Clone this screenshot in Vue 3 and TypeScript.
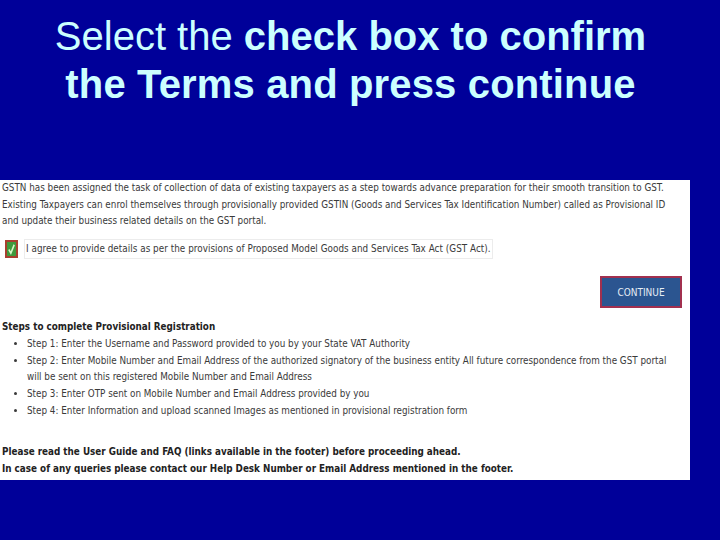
<script setup lang="ts">
const steps: string[] = [
  'Step 1: Enter the Username and Password provided to you by your State VAT Authority',
  'Step 2: Enter Mobile Number and Email Address of the authorized signatory of the business entity All future correspondence from the GST portal will be sent on this registered Mobile Number and Email Address',
  'Step 3: Enter OTP sent on Mobile Number and Email Address provided by you',
  'Step 4: Enter Information and upload scanned Images as mentioned in provisional registration form'
]
</script>

<template>
  <main class="slide">
    <h1 class="title">Select the <b>check box to confirm</b><br /><b class="second">the Terms and press continue</b></h1>
    <section class="panel">
      <p class="intro">GSTN has been assigned the task of collection of data of existing taxpayers as a step towards advance preparation for their smooth transition to GST.<br />Existing Taxpayers can enrol themselves through provisionally provided GSTIN (Goods and Services Tax Identification Number) called as Provisional ID<br />and update their business related details on the GST portal.</p>
      <div class="agree">
        <span class="check">
          <svg viewBox="0 0 10 12" width="9" height="14" preserveAspectRatio="none"><path d="M2 6.4 L4.3 9.6 L8 2.4" fill="none" stroke="#d8f5c8" stroke-width="1.7" /></svg>
        </span>
        <span class="agree-text">I agree to provide details as per the provisions of Proposed Model Goods and Services Tax Act (GST Act).</span>
      </div>
      <div class="actions"><button class="continue">CONTINUE</button></div>
      <h2 class="steps-title">Steps to complete Provisional Registration</h2>
      <ul class="steps">
        <li v-for="s in steps" :key="s">{{ s }}</li>
      </ul>
      <p class="note">Please read the User Guide and FAQ (links available in the footer) before proceeding ahead.<br />In case of any queries please contact our Help Desk Number or Email Address mentioned in the footer.</p>
    </section>
  </main>
</template>

<style>
html, body { margin: 0; background: #000099; }
</style>

<style scoped>
.slide {
  width: 720px;
  height: 540px;
  background: #000099;
  overflow: hidden;
  padding-top: 12px;
  box-sizing: border-box;
}
.title {
  margin: 0;
  height: 168px;
  width: 701px;
  text-align: center;
  font: 400 40px/48px "Liberation Sans", Arial, sans-serif;
  color: #ccffff;
}
.title b { font-weight: 700; }
.title .second { letter-spacing: 0.15px; }
.panel {
  width: 690px;
  height: 300px;
  background: #fff;
  box-sizing: border-box;
  padding: 0 0 0 2px;
  font: 400 9.8px/16.7px "DejaVu Sans", Verdana, sans-serif;
  font-stretch: condensed;
  color: #3a3a3a;
  overflow: hidden;
}
.intro { margin: 0; white-space: nowrap; }
.agree {
  display: flex;
  align-items: center;
  gap: 6px;
  margin-top: 9px;
  height: 20px;
  padding-left: 3px;
}
.check {
  width: 9px;
  height: 14px;
  background: #3f9a3c;
  border: 2px solid #a8402f;
  display: flex;
  align-items: center;
  justify-content: center;
}
.agree-text {
  border: 1px solid #ececec;
  height: 20px;
  box-sizing: border-box;
  line-height: 18px;
  padding: 0 1px 0 1px;
  letter-spacing: 0.04px;
}
.actions {
  display: flex;
  justify-content: flex-end;
  margin-top: 17px;
  padding-right: 8px;
}
.continue {
  width: 82px;
  height: 32px;
  box-sizing: border-box;
  background: #2b5590;
  border: 2px solid #a2304f;
  color: #e6edf5;
  font: 400 10px "DejaVu Sans", Verdana, sans-serif;
  font-stretch: condensed;
  padding: 0;
}
.steps-title {
  margin: 11px 0 0;
  font: 700 9.8px/16.7px "DejaVu Sans", Verdana, sans-serif;
  font-stretch: condensed;
  color: #222;
}
.steps {
  margin: 0;
  padding: 0 0 0 25px;
  width: 648px;
}
.note {
  margin: 25px 0 0;
  font-weight: 700;
  color: #222;
}
</style>
